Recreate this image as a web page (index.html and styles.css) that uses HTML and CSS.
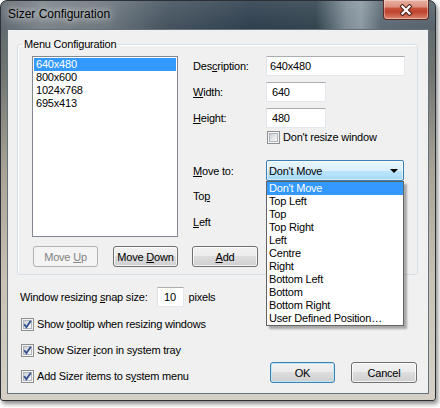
FILE: index.html
```html
<!DOCTYPE html>
<html>
<head>
<meta charset="utf-8">
<title>Sizer Configuration</title>
<link rel="stylesheet" href="styles.css">
</head>
<body>
<div class="window">
  <div class="titlebar">
    <span class="title">Sizer Configuration</span>
    <button class="close" aria-label="Close">
      <svg width="14" height="12" viewBox="0 0 14 12">
        <path d="M3.5 2.5 L10.5 9.5 M10.5 2.5 L3.5 9.5" stroke="#4b211a" stroke-width="4.2" stroke-linecap="square" fill="none"/>
        <path d="M3.5 2.5 L10.5 9.5 M10.5 2.5 L3.5 9.5" stroke="#ffffff" stroke-width="2.2" stroke-linecap="square" fill="none"/>
      </svg>
    </button>
  </div>

  <div class="client">
    <fieldset class="group">
      <legend>Menu Configuration</legend>
      <div class="group-body">
        <ul class="listbox">
          <li class="sel">640x480</li>
          <li>800x600</li>
          <li>1024x768</li>
          <li>695x413</li>
        </ul>

        <div class="form">
          <div class="row r-desc"><span class="lbl">Des<u>c</u>ription:</span><span class="edit wide">640x480</span></div>
          <div class="row r-gap"><span class="lbl"><u>W</u>idth:</span><span class="edit num">640</span></div>
          <div class="row r-gap"><span class="lbl"><u>H</u>eight:</span><span class="edit num">480</span></div>
          <div class="row r-check">
            <span></span>
            <span class="check-line">
              <span class="check"></span>
              <span>Don't resize window</span>
            </span>
          </div>
          <div class="row r-combo">
            <span class="lbl"><u>M</u>ove to:</span>
            <div class="combo">
              <span class="combo-text">Don't Move</span>
              <span class="arrow"></span>
              <ul class="dropdown">
                <li class="sel">Don't Move</li>
                <li>Top Left</li>
                <li>Top</li>
                <li>Top Right</li>
                <li>Left</li>
                <li>Centre</li>
                <li>Right</li>
                <li>Bottom Left</li>
                <li>Bottom</li>
                <li>Bottom Right</li>
                <li>User Defined Position…</li>
              </ul>
            </div>
          </div>
          <div class="row r-top"><span class="lbl">To<u>p</u></span><span></span></div>
          <div class="row r-gap"><span class="lbl"><u>L</u>eft</span><span></span></div>
        </div>

        <div class="list-buttons">
          <button class="btn" disabled>Move <u>U</u>p</button>
          <button class="btn">Move <u>D</u>own</button>
        </div>
        <div class="add-row">
          <button class="btn btn-add"><u>A</u>dd</button>
        </div>
      </div>
    </fieldset>

    <div class="footer">
      <div class="options">
        <div class="snap">
          <span>Window resizing <u>s</u>nap size:</span>
          <span class="edit snap-edit">10</span>
          <span>pixels</span>
        </div>
        <div class="check-row">
          <span class="check on"><svg width="13" height="13" viewBox="0 0 13 13"><path d="M3.2 6.2 L5.4 9.2 L9.8 2.8" stroke="#35508e" stroke-width="1.9" fill="none"/></svg></span>
          <span>Show <u>t</u>ooltip when resizing windows</span>
        </div>
        <div class="check-row">
          <span class="check on"><svg width="13" height="13" viewBox="0 0 13 13"><path d="M3.2 6.2 L5.4 9.2 L9.8 2.8" stroke="#35508e" stroke-width="1.9" fill="none"/></svg></span>
          <span>Show Sizer <u>i</u>con in system tray</span>
        </div>
        <div class="check-row">
          <span class="check on"><svg width="13" height="13" viewBox="0 0 13 13"><path d="M3.2 6.2 L5.4 9.2 L9.8 2.8" stroke="#35508e" stroke-width="1.9" fill="none"/></svg></span>
          <span>Add Sizer items to s<u>y</u>stem menu</span>
        </div>
      </div>
      <div class="actions">
        <button class="btn btn-default">OK</button>
        <button class="btn btn-cancel">Cancel</button>
      </div>
    </div>
  </div>
</div>
</body>
</html>
```

FILE: styles.css
```css
* { box-sizing: border-box; }

html, body {
  margin: 0;
  padding: 0;
  background: #ffffff;
}

body {
  width: 440px;
  height: 408px;
  overflow: hidden;
  font-family: "Liberation Sans", Arial, sans-serif;
  font-size: 11px;
  letter-spacing: -0.2px;
  color: #000;
}

u { text-decoration: underline; text-underline-offset: 1px; }

ul { margin: 0; padding: 0; list-style: none; }

/* ---------- window frame ---------- */
.window {
  width: 436px;
  height: 401px;
  border: 1px solid #2a3036;
  border-radius: 7px 7px 3px 3px;
  padding: 0 6px 6px;
  display: flex;
  flex-direction: column;
  background:
    linear-gradient(180deg, rgba(255,255,255,0.10) 0, rgba(255,255,255,0) 28px) top / 100% 29px no-repeat,
    linear-gradient(90deg, #5f686f 0, #7b848a 40px, #6c767d 105px, #45535f 165px, #2f3f4e 250px, #33444f 315px, #7c8b95 345px, #8c9aa3 360px, #5d6b76 380px, #56626b 436px) top / 100% 29px no-repeat,
    linear-gradient(180deg, #5a646c 0, #6f7470 70px, #a9a396 170px, #c8c2b5 280px, #d5d0c5 100%);
  box-shadow: 2px 3px 4px rgba(0,0,0,0.45);
}

.titlebar {
  height: 28px;
  display: flex;
  align-items: flex-start;
}

.title {
  margin: 6px 0 0 1px;
  font-size: 12px;
  line-height: 15px;
  letter-spacing: 0;
  color: #000;
  text-shadow: 0 0 6px rgba(255,255,255,0.85), 0 0 12px rgba(255,255,255,0.6);
}

.close {
  margin: -1px 0 0 auto;
  width: 46px;
  height: 20px;
  padding: 0;
  border: 1px solid #5b2b22;
  border-top: none;
  border-radius: 0 0 4px 4px;
  background: linear-gradient(180deg, #eab0a2 0, #dd927f 35%, #c6503a 45%, #bf432d 62%, #cf6a53 85%, #dc8a76 100%);
  box-shadow: inset 0 0 0 1px rgba(255,255,255,0.35);
  display: flex;
  align-items: center;
  justify-content: center;
}

/* ---------- client area ---------- */
.client {
  flex: 1;
  border: 1px solid #66727b;
  background: #f0f0f0;
  display: flex;
  flex-direction: column;
}

.group {
  margin: 8px 10px 0 9px;
  padding: 0;
  min-width: 0;
  border: 1px solid #d5dfe5;
  border-radius: 3px;
  box-shadow: inset 1px 1px 0 #ffffff;
}

.group legend {
  margin-left: 4px;
  padding: 0 2px;
  line-height: 13px;
  font-size: 11px;
}

.group-body {
  padding: 5px 12px 7px 14px;
  display: grid;
  grid-template-columns: 146px 1fr;
  grid-template-rows: 181px 21px;
  column-gap: 14px;
  row-gap: 9px;
}

.listbox {
  border: 1px solid #828790;
  background: #fff;
  padding: 1px;
}

.listbox li,
.dropdown li {
  height: 13px;
  line-height: 13px;
  padding-left: 2px;
  white-space: nowrap;
}

.listbox li.sel,
.dropdown li.sel {
  background: #3399ff;
  color: #fff;
}

/* ---------- form column ---------- */
.form {
  display: flex;
  flex-direction: column;
}

.row {
  display: grid;
  grid-template-columns: 74px auto;
  align-items: center;
  height: 20px;
}

.lbl { padding-left: 1px; }

.r-gap { margin-top: 6px; }
.r-check { margin-top: 2px; height: 14px; }
.r-combo { margin-top: 16px; height: 21px; }
.r-top { margin-top: 5px; }

.edit {
  display: block;
  height: 20px;
  border: 1px solid;
  border-color: #abadb3 #e3e9ef #e3e9ef #e2e3ea;
  background: #fff;
  line-height: 18px;
  padding: 0 3px;
}

.edit.wide { width: 139px; }
.edit.num { width: 60px; padding-left: 5px; }

.check-line {
  display: flex;
  align-items: center;
  gap: 3px;
  padding-left: 1px;
}

.check {
  position: relative;
  flex: none;
  width: 13px;
  height: 13px;
  border: 1px solid #8e8f8f;
  background: #f4f4f4;
}

.check::before {
  content: "";
  position: absolute;
  inset: 1px;
  border: 1px solid #b2b7bd;
  background: linear-gradient(135deg, #c9cdd3 0, #e6e8eb 55%, #f8f8f8 100%);
}

.check svg {
  position: absolute;
  left: -1px;
  top: -1px;
}

/* combo box with its open list */
.combo {
  position: relative;
  width: 138px;
  height: 21px;
  border: 1px solid #3c7fb1;
  border-radius: 2px;
  background: linear-gradient(180deg, #eaf6fd 0, #d9f0fc 50%, #bee6fd 50%, #a7d9f5 100%);
  box-shadow: inset 0 0 0 1px rgba(255,255,255,0.5);
  display: flex;
  align-items: center;
  padding-left: 2px;
}

.combo-text { flex: 1; }

.arrow {
  width: 0;
  height: 0;
  margin-right: 5px;
  border-left: 4px solid transparent;
  border-right: 4px solid transparent;
  border-top: 4px solid #000;
}

.dropdown {
  position: absolute;
  left: -1px;
  top: 20px;
  width: 138px;
  border: 1px solid #646464;
  background: #fff;
  box-shadow: 3px 3px 2px rgba(0,0,0,0.3);
  z-index: 2;
}

/* ---------- buttons ---------- */
.btn {
  height: 21px;
  padding: 0;
  font-family: inherit;
  font-size: 11px;
  letter-spacing: -0.2px;
  color: #000;
  border: 1px solid #707070;
  border-radius: 3px;
  background: linear-gradient(180deg, #f2f2f2 0, #ebebeb 50%, #dddddd 50%, #cfcfcf 100%);
  box-shadow: inset 0 0 0 1px rgba(255,255,255,0.75);
}

.btn:disabled {
  color: #838383;
  border-color: #adb2b5;
  background: #f4f4f4;
  box-shadow: none;
}

.list-buttons {
  display: flex;
  gap: 15px;
  padding-left: 1px;
}

.list-buttons .btn { width: 65px; }

.btn-add { width: 66px; }

.btn-default {
  width: 65px;
  border-color: #3c7fb1;
  box-shadow: inset 0 0 0 1px #bfe7fb;
}

.btn-cancel { width: 66px; }

/* ---------- footer options ---------- */
.footer {
  flex: 1;
  padding: 12px 11px 7px 12px;
  display: flex;
  justify-content: space-between;
  align-items: flex-end;
}

.options {
  display: flex;
  flex-direction: column;
}

.snap {
  display: flex;
  align-items: center;
  height: 20px;
}

.snap-edit {
  width: 27px;
  margin: 0 5px 0 9px;
  text-align: center;
}

.check-row {
  display: flex;
  align-items: center;
  gap: 3px;
  height: 20px;
  margin-top: 6px;
  padding-left: 1px;
}

.snap + .check-row { margin-top: 7px; }

.actions {
  display: flex;
  gap: 16px;
  margin-bottom: 3px;
}
```
